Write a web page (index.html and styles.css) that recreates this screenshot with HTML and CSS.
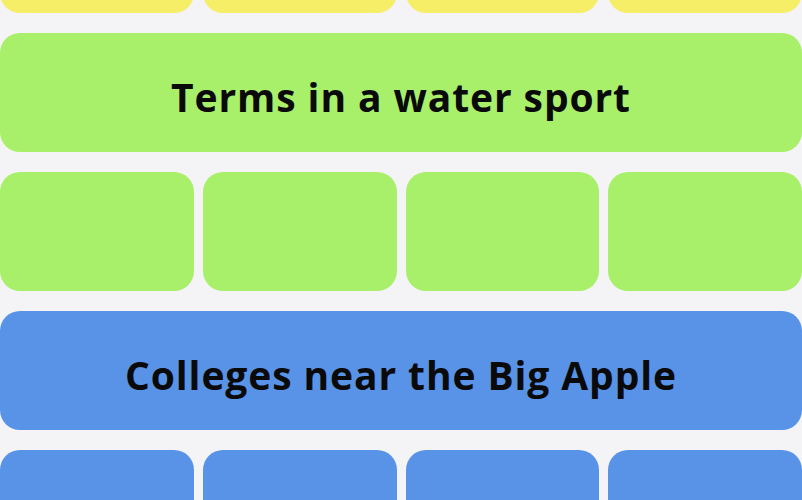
FILE: index.html
```html
<!DOCTYPE html>
<html lang="en">
<head>
    <meta charset="UTF-8">
    <meta name="viewport" content="width=device-width, initial-scale=1.0">
    <title>Connections</title>
    <link rel="stylesheet" href="styles.css">
</head>
<body>
    <!-- Board: solved groups as banners, open groups as tile rows -->
    <main class="board">
        <div class="tile-row yellow">
            <div class="tile"></div>
            <div class="tile"></div>
            <div class="tile"></div>
            <div class="tile"></div>
        </div>

        <div class="banner green">Terms in a water sport</div>

        <div class="tile-row green">
            <div class="tile"></div>
            <div class="tile"></div>
            <div class="tile"></div>
            <div class="tile"></div>
        </div>

        <div class="banner blue">Colleges near the Big Apple</div>

        <div class="tile-row blue">
            <div class="tile"></div>
            <div class="tile"></div>
            <div class="tile"></div>
            <div class="tile"></div>
        </div>
    </main>
</body>
</html>
```

FILE: styles.css
```css
:root {
    --yellow: #f5ee66;
    --green: #a8ef6a;
    --blue: #5893e8;
    --background-color: #f4f4f6;
    --text-color: #0a0a0a;
}

body {
    font-family: 'Open Sans', 'Lato', sans-serif;
    margin: 0;
    padding: 0;
    background-color: var(--background-color);
    color: var(--text-color);
    overflow: hidden;
}

/* Board */
.board {
    display: flex;
    flex-direction: column;
    gap: 20px;
    margin-top: -106px;
}

.tile-row {
    display: grid;
    grid-template-columns: repeat(4, 1fr);
    gap: 9px;
}

.tile {
    height: 119px;
    border-radius: 20px;
}

.banner {
    height: 119px;
    box-sizing: border-box;
    padding-top: 8px;
    border-radius: 20px;
    display: flex;
    align-items: center;
    justify-content: center;
    font-size: 39px;
    font-weight: 700;
    letter-spacing: 0.9px;
}

/* Group colours */
.yellow .tile { background-color: var(--yellow); }
.green .tile, .banner.green { background-color: var(--green); }
.blue .tile, .banner.blue { background-color: var(--blue); }
```
